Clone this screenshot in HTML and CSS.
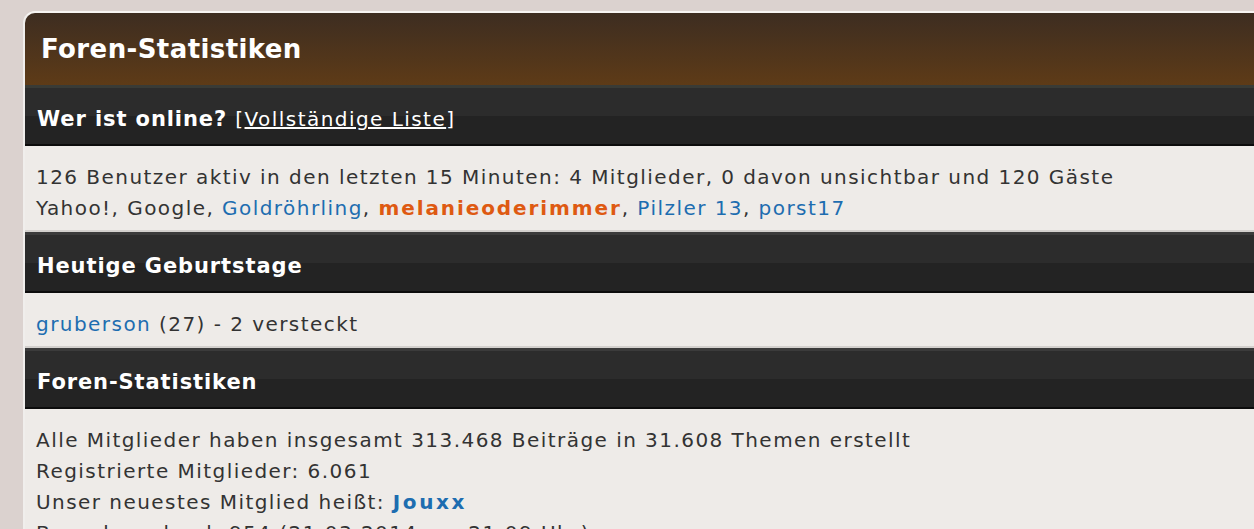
FILE: index.html
```html
<!DOCTYPE html>
<html lang="de">
<head>
    <meta charset="UTF-8">
    <meta name="viewport" content="width=device-width, initial-scale=1.0">
    <title>Foren-Statistiken</title>
    <link rel="stylesheet" href="styles.css">
</head>
<body>
    <div class="forabg">
        <h2 class="forabg-title">Foren-Statistiken</h2>

        <h3 class="cat-head">Wer ist online? <span class="cat-extra">[<a href="#">Vollständige Liste</a>]</span></h3>
        <div class="cat-body">
            126 Benutzer aktiv in den letzten 15 Minuten: 4 Mitglieder, 0 davon unsichtbar und 120 Gäste<br>
            Yahoo!, Google, <a href="#" class="user">Goldröhrling</a>, <a href="#" class="user admin">melanieoderimmer</a>, <a href="#" class="user">Pilzler 13</a>, <a href="#" class="user">porst17</a>
        </div>

        <h3 class="cat-head">Heutige Geburtstage</h3>
        <div class="cat-body">
            <a href="#" class="user">gruberson</a> (27) - 2 versteckt
        </div>

        <h3 class="cat-head">Foren-Statistiken</h3>
        <div class="cat-body">
            Alle Mitglieder haben insgesamt 313.468 Beiträge in 31.608 Themen erstellt<br>
            Registrierte Mitglieder: 6.061<br>
            Unser neuestes Mitglied heißt: <a href="#" class="user newest">Jouxx</a><br>
            Besucherrekord: 954 (21.03.2014 um 21:09 Uhr)
        </div>
    </div>
</body>
</html>
```

FILE: styles.css
```css
body {
    margin: 0;
    padding: 11px 0 0 23px;
    background-color: #dbd2cf;
    font-family: "DejaVu Sans", Verdana, sans-serif;
    color: #333;
    overflow: hidden;
}

.forabg {
    margin-right: -40px;
    background-color: #eeebe8;
    border-top: 2px solid #f6f4f2;
    border-left: 2px solid #f0eeec;
    border-radius: 12px 0 0 0;
    overflow: hidden;
}

.forabg-title {
    margin: 0;
    height: 72px;
    line-height: 72px;
    padding-left: 16px;
    font-size: 26px;
    letter-spacing: 0.4px;
    font-weight: bold;
    color: #fff;
    background: linear-gradient(#3d2d21, #5e3b17);
}

.cat-head {
    margin: 0;
    height: 50px;
    line-height: 50px;
    padding: 6px 0 0 12px;
    font-size: 21px;
    letter-spacing: 0.9px;
    font-weight: bold;
    color: #fff;
    border-top: 3px solid #393b36;
    border-bottom: 2px solid #0c0c0c;
    background: linear-gradient(#2c2c2c 50%, #232323 50%);
}

.cat-body + .cat-head {
    border-top-color: #3b3b3b;
    box-shadow: 0 -2px 0 #d3d0cd;
}

.cat-extra {
    font-weight: normal;
    font-size: 20px;
    letter-spacing: 1.45px;
}

.cat-extra a {
    color: #fff;
}

.cat-body {
    padding: 16px 11px 8px;
    font-size: 20px;
    letter-spacing: 1.45px;
    line-height: 31px;
}

.user {
    color: #1d6db0;
    text-decoration: none;
}

.admin {
    color: #de5a12;
    font-weight: bold;
    letter-spacing: 1.9px;
}

.newest {
    font-weight: bold;
    letter-spacing: 2.6px;
}
```
